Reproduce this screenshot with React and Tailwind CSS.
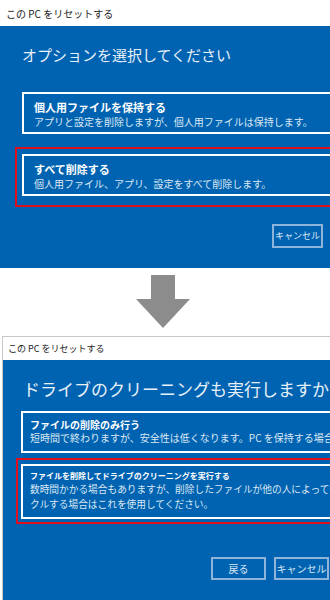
const jp = { fontFamily: '"Noto Sans CJK JP", "Noto Sans", sans-serif' };

function Card({ title, titleClass, desc, descClass, className }) {
  return (
    <div className={`border-2 border-white -mr-10 ${className}`}>
      <div className={`font-bold text-white whitespace-nowrap ${titleClass}`}>{title}</div>
      {desc.map((line, i) => (
        <div key={i} className={`text-[#dce8f4] whitespace-nowrap ${descClass}`}>
          {line}
        </div>
      ))}
    </div>
  );
}

function Button({ children, className }) {
  return (
    <div
      className={`border-2 border-[#8fb4da] text-[#dce8f4] whitespace-nowrap flex items-center justify-center ${className}`}
    >
      {children}
    </div>
  );
}

export default function App() {
  return (
    <div className="w-[330px] h-[600px] overflow-hidden bg-white flex flex-col" style={jp}>
      {/* first screen */}
      <div className="h-[26px] shrink-0 bg-white flex items-center pl-[6px] text-[10px] text-[#222]">
        この PC をリセットする
      </div>
      <div className="h-[242px] shrink-0 bg-[#0063b1] flex flex-col pl-[22px] pt-[18px] overflow-hidden">
        <div className="text-[15px] leading-[22px] text-[#e8f0f8] whitespace-nowrap">
          オプションを選択してください
        </div>
        <Card
          className="mt-[26px] pt-[6px] pl-[10px] pb-[3px]"
          titleClass="text-[11px] leading-[14px]"
          descClass="text-[10px] leading-[15px]"
          title="個人用ファイルを保持する"
          desc={["アプリと設定を削除しますが、個人用ファイルは保持します。"]}
        />
        <div className="relative mt-[20px]">
          <div className="absolute -top-[7px] -bottom-[11px] -left-[7px] -right-20 border-2 border-[#e0101e]" />
          <Card
            className="pt-[6px] pl-[10px] pb-[3px]"
            titleClass="text-[11px] leading-[14px]"
            descClass="text-[10px] leading-[15px]"
            title="すべて削除する"
            desc={["個人用ファイル、アプリ、設定をすべて削除します。"]}
          />
        </div>
        <div className="flex justify-end mt-[28px] pr-[7px]">
          <Button className="w-[51px] h-[24px] text-[9px]">キャンセル</Button>
        </div>
      </div>

      {/* arrow */}
      <div className="h-[68px] shrink-0 flex justify-center pt-[7px]">
        <svg width="54" height="53" viewBox="0 0 54 53" className="ml-[-5px]">
          <polygon points="15,0 39,0 39,24 54,24 27,53 0,24 15,24" fill="#8c8c8c" />
        </svg>
      </div>

      {/* second screen */}
      <div className="flex-1 ml-[2px] border-t border-l border-[#c8c8c8] flex flex-col overflow-hidden">
        <div className="h-[23px] shrink-0 bg-white flex items-center pl-[5px] text-[9px] text-[#222]">
          この PC をリセットする
        </div>
        <div className="flex-1 bg-[#0063b1] flex flex-col pl-[18px] pt-[17px] overflow-hidden">
          <div className="pl-[2px] text-[17px] leading-[24px] text-[#e8f0f8] whitespace-nowrap">
            ドライブのクリーニングも実行しますか？
          </div>
          <Card
            className="mt-[10px] pt-[5px] pl-[7px] pb-[6px]"
            titleClass="text-[10px] leading-[13px]"
            descClass="text-[10px] leading-[14px]"
            title="ファイルの削除のみ行う"
            desc={["短時間で終わりますが、安全性は低くなります。PC を保持する場合はこちらを選択してください。"]}
          />
          <div className="relative mt-[11px]">
            <div className="absolute -top-[6px] -bottom-[5px] -left-[5px] -right-20 border-2 border-[#e0101e]" />
            <Card
              className="pt-[4px] pl-[7px] pb-[5px]"
              titleClass="text-[8px] leading-[12px]"
              descClass="text-[9.7px] leading-[15px]"
              title="ファイルを削除してドライブのクリーニングを実行する"
              desc={[
                "数時間かかる場合もありますが、削除したファイルが他の人によって復元されにくくなります。PC をリサイ",
                "クルする場合はこれを使用してください。",
              ]}
            />
          </div>
          <div className="flex justify-end mt-[38px] pr-[1px] gap-[8px]">
            <Button className="w-[55px] h-[23px] text-[10px]">戻る</Button>
            <Button className="w-[55px] h-[23px] text-[10px]">キャンセル</Button>
          </div>
        </div>
      </div>
    </div>
  );
}
